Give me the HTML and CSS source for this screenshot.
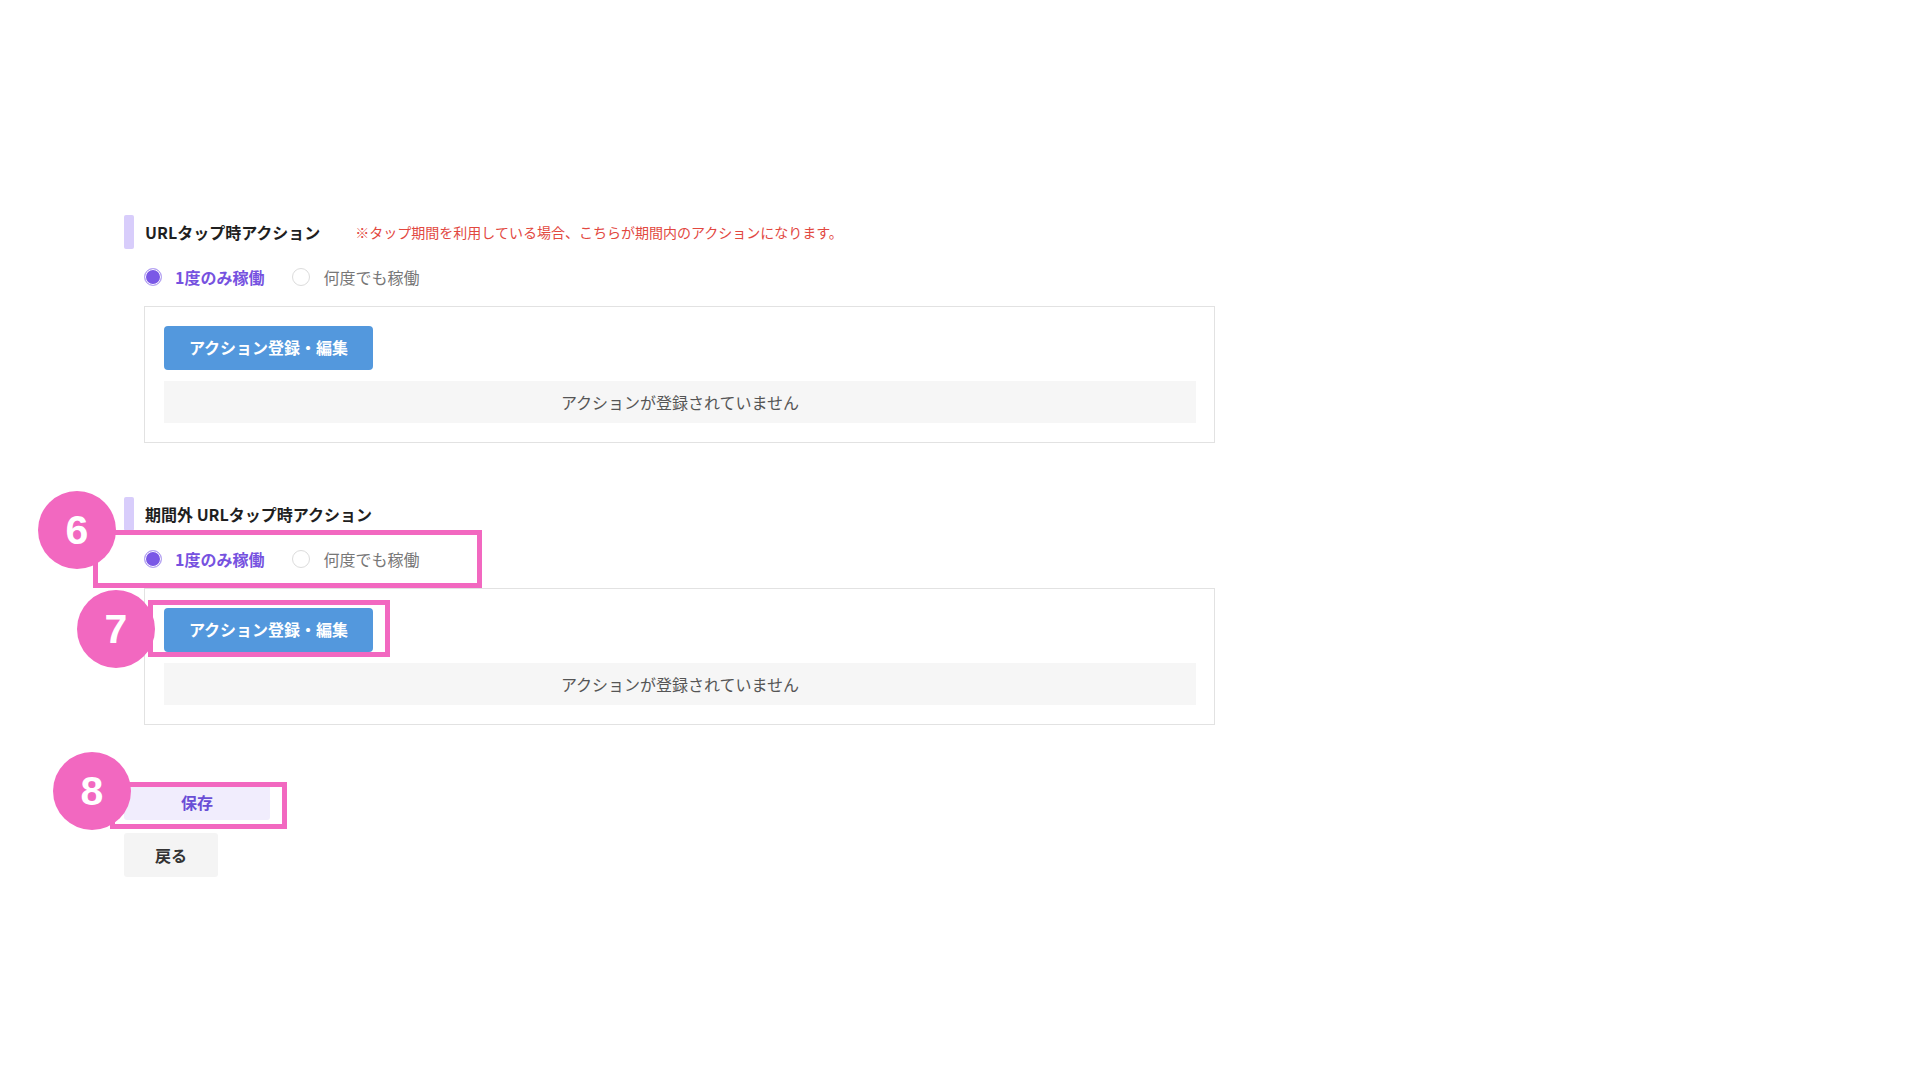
FILE: index.html
```html
<!DOCTYPE html>
<html lang="ja">
<head>
<meta charset="utf-8">
<title>URLタップ時アクション</title>
<link rel="stylesheet" href="styles.css">
</head>
<body>
<div class="page">
  <main class="content">
    <section class="section">
      <div class="heading">
        <span class="heading-bar"></span>
        <h2 class="heading-title">URLタップ時アクション</h2>
        <span class="heading-note">※タップ期間を利用している場合、こちらが期間内のアクションになります。</span>
      </div>
      <div class="radios">
        <label class="radio radio-on"><span class="radio-dot"></span><span class="radio-label">1度のみ稼働</span></label>
        <label class="radio"><span class="radio-dot"></span><span class="radio-label">何度でも稼働</span></label>
      </div>
      <div class="action-box">
        <button class="btn-action">アクション登録・編集</button>
        <div class="empty">アクションが登録されていません</div>
      </div>
    </section>

    <section class="section section-2">
      <div class="heading">
        <span class="heading-bar"></span>
        <h2 class="heading-title">期間外 URLタップ時アクション</h2>
      </div>
      <div class="radios">
        <label class="radio radio-on"><span class="radio-dot"></span><span class="radio-label">1度のみ稼働</span></label>
        <label class="radio"><span class="radio-dot"></span><span class="radio-label">何度でも稼働</span></label>
      </div>
      <div class="action-box">
        <button class="btn-action">アクション登録・編集</button>
        <div class="empty">アクションが登録されていません</div>
      </div>
    </section>

    <div class="footer-buttons">
      <button class="btn-save">保存</button>
      <button class="btn-back">戻る</button>
    </div>
  </main>

  <div class="mark mark-rect mark-rect-6"></div>
  <div class="mark mark-rect mark-rect-7"></div>
  <div class="mark mark-rect mark-rect-8"></div>
  <div class="mark mark-circle mark-circle-6">6</div>
  <div class="mark mark-circle mark-circle-7">7</div>
  <div class="mark mark-circle mark-circle-8">8</div>
</div>
</body>
</html>
```

FILE: styles.css
```css
* {
  box-sizing: border-box;
}

html, body {
  margin: 0;
  padding: 0;
  background: #ffffff;
}

body {
  font-family: "Noto Sans CJK JP", "Noto Sans", sans-serif;
  color: #222222;
}

.page {
  position: relative;
  width: 1920px;
  height: 1080px;
  overflow: hidden;
}

.content {
  padding: 215px 0 0 124px;
  width: 1215px;
}

.section-2 {
  margin-top: 54px;
}

.heading {
  display: flex;
  align-items: center;
  height: 34px;
}

.heading-bar {
  width: 10px;
  height: 34px;
  border-radius: 2px;
  background: #d8cdfb;
  flex: none;
}

.heading-title {
  margin: 0 0 0 11px;
  font-size: 16px;
  font-weight: 700;
  color: #1f1f1f;
  line-height: 1;
}

.heading-note {
  margin-left: 35px;
  font-size: 14px;
  color: #e2483f;
  line-height: 1;
}

.radios {
  display: flex;
  align-items: center;
  height: 24px;
  margin: 16px 0 0 20px;
}

.radio {
  display: flex;
  align-items: center;
  margin-right: 28px;
  cursor: pointer;
}

.radio-dot {
  width: 18px;
  height: 18px;
  border-radius: 50%;
  border: 1px solid #dcdcdc;
  background: #fff;
  flex: none;
}

.radio-label {
  margin-left: 13px;
  font-size: 16px;
  color: #777777;
  line-height: 1;
}

.radio-on .radio-dot {
  border: 1px solid #b9a8f3;
  background: #7a58e6;
  box-shadow: inset 0 0 0 1px #ffffff;
}

.radio-on .radio-label {
  font-weight: 700;
  color: #7652e0;
}

.action-box {
  margin: 17px 0 0 20px;
  width: 1071px;
  border: 1px solid #e2e2e2;
  padding: 19px 18px 19px 19px;
  display: flex;
  flex-direction: column;
  align-items: flex-start;
  gap: 11px;
}

.btn-action {
  height: 44px;
  width: 209px;
  border: none;
  border-radius: 4px;
  background: #5398dd;
  color: #ffffff;
  font-family: inherit;
  font-size: 16px;
  font-weight: 700;
  padding: 0 0 2px;
}

.empty {
  align-self: stretch;
  height: 42px;
  background: #f6f6f6;
  display: flex;
  align-items: center;
  justify-content: center;
  font-size: 16px;
  color: #555555;
}

.footer-buttons {
  margin-top: 58px;
  display: flex;
  flex-direction: column;
  align-items: flex-start;
  gap: 13px;
}

.btn-save,
.btn-back {
  border: none;
  border-radius: 3px;
  font-family: inherit;
  font-size: 16px;
  font-weight: 700;
  padding: 0;
}

.btn-save {
  width: 146px;
  height: 37px;
  background: #f1edfd;
  color: #6a4ed6;
}

.btn-back {
  width: 94px;
  height: 44px;
  background: #f4f4f4;
  color: #333333;
}

/* annotation overlay */
.mark {
  position: absolute;
}

.mark-rect {
  border: 5px solid #f268c0;
}

.mark-rect-6 {
  left: 93px;
  top: 530px;
  width: 389px;
  height: 58px;
}

.mark-rect-7 {
  left: 148px;
  top: 600px;
  width: 242px;
  height: 57px;
}

.mark-rect-8 {
  left: 110px;
  top: 782px;
  width: 177px;
  height: 47px;
}

.mark-circle {
  width: 78px;
  height: 78px;
  border-radius: 50%;
  background: #f268c0;
  color: #ffffff;
  font-family: "Liberation Sans", Arial, sans-serif;
  font-weight: 700;
  font-size: 41px;
  display: flex;
  align-items: center;
  justify-content: center;
}

.mark-circle-6 {
  left: 38px;
  top: 491px;
}

.mark-circle-7 {
  left: 77px;
  top: 590px;
}

.mark-circle-8 {
  left: 53px;
  top: 752px;
}
```
